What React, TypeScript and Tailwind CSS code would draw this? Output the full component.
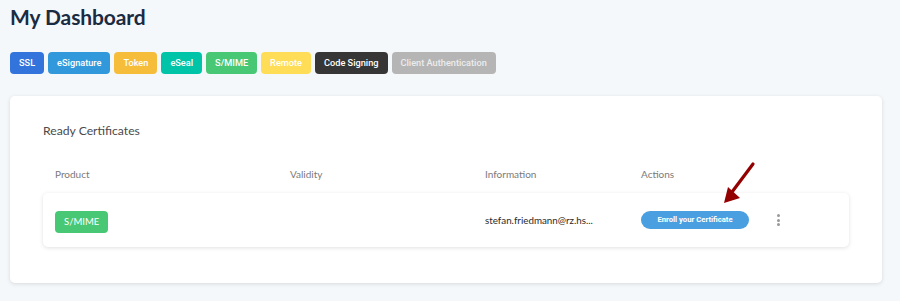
import React from 'react';

const CATEGORIES = [
  { label: 'SSL', cls: 'bg-[#3273dc] text-white' },
  { label: 'eSignature', cls: 'bg-[#3298dc] text-white' },
  { label: 'Token', cls: 'bg-[#f6bd3a] text-white' },
  { label: 'eSeal', cls: 'bg-[#00c4a7] text-white' },
  { label: 'S/MIME', cls: 'bg-[#48c774] text-white' },
  { label: 'Remote', cls: 'bg-[#ffdd57] text-white' },
  { label: 'Code Signing', cls: 'bg-[#363636] text-white' },
  { label: 'Client Authentication', cls: 'bg-[#b5b5b5] text-[#ececec]' },
];

function Arrow() {
  return (
    <svg
      width="40"
      height="46"
      viewBox="0 0 40 46"
      className="absolute left-[675px] top-[-35px] pointer-events-none"
    >
      <line x1="35" y1="6" x2="14" y2="34" stroke="#940000" strokeWidth="3.2" strokeLinecap="round" />
      <polygon points="6,45 10,29 22,40" fill="#940000" />
    </svg>
  );
}

export default function App() {
  return (
    <div className="min-h-[301px] bg-[#f5f8fb] pl-[10px] pr-[18px] pt-[5px] pb-4 font-['Lato','Noto_Sans',sans-serif]">
      <h1 className="text-[21px] leading-[24px] font-bold text-[#1a2b42] tracking-[-0.1px]">
        My Dashboard
      </h1>

      {/* Category filters */}
      <div className="mt-[23px] flex gap-[4px] font-['Roboto',sans-serif]">
        {CATEGORIES.map((c) => (
          <button
            key={c.label}
            className={`h-[22px] px-[9px] rounded-[4px] text-[9.2px] font-medium ${c.cls}`}
          >
            {c.label}
          </button>
        ))}
      </div>

      {/* Card */}
      <div className="mt-[22px] bg-white rounded-[5px] shadow-[0_1px_4px_rgba(0,0,0,0.12)] px-[33px] pt-[25px] pb-[36px]">
        <h2 className="text-[12.2px] leading-[20px] text-[#4a4a4a]">Ready Certificates</h2>

        <div className="mt-[25px] grid grid-cols-[235px_195px_156px_1fr] px-[12px] text-[10px] leading-[16px] text-[#7a7a7a]">
          <span>Product</span>
          <span>Validity</span>
          <span>Information</span>
          <span>Actions</span>
        </div>

        <div className="relative mt-[11px] h-[54px] bg-white rounded-[5px] shadow-[0_1px_4px_rgba(0,0,0,0.12)] grid grid-cols-[235px_195px_156px_1fr] items-center px-[12px]">
          <div>
            <span className="inline-flex items-center h-[22px] px-[9px] rounded-[4px] bg-[#48c774] text-white text-[9.5px]">
              S/MIME
            </span>
          </div>
          <div />
          <div className="text-[9.8px] text-[#2a2a2a]">stefan.friedmann@rz.hs...</div>
          <div className="flex items-center">
            <button className="h-[18px] w-[108px] rounded-full bg-[#4a9fe0] text-white text-[7.7px] font-bold font-['Roboto',sans-serif]">
              Enroll your Certificate
            </button>
            <span className="ml-[28px] flex flex-col gap-[1.5px]">
              <span className="w-[3px] h-[3px] rounded-full bg-[#999]" />
              <span className="w-[3px] h-[3px] rounded-full bg-[#999]" />
              <span className="w-[3px] h-[3px] rounded-full bg-[#999]" />
            </span>
          </div>
          <Arrow />
        </div>
      </div>
    </div>
  );
}
